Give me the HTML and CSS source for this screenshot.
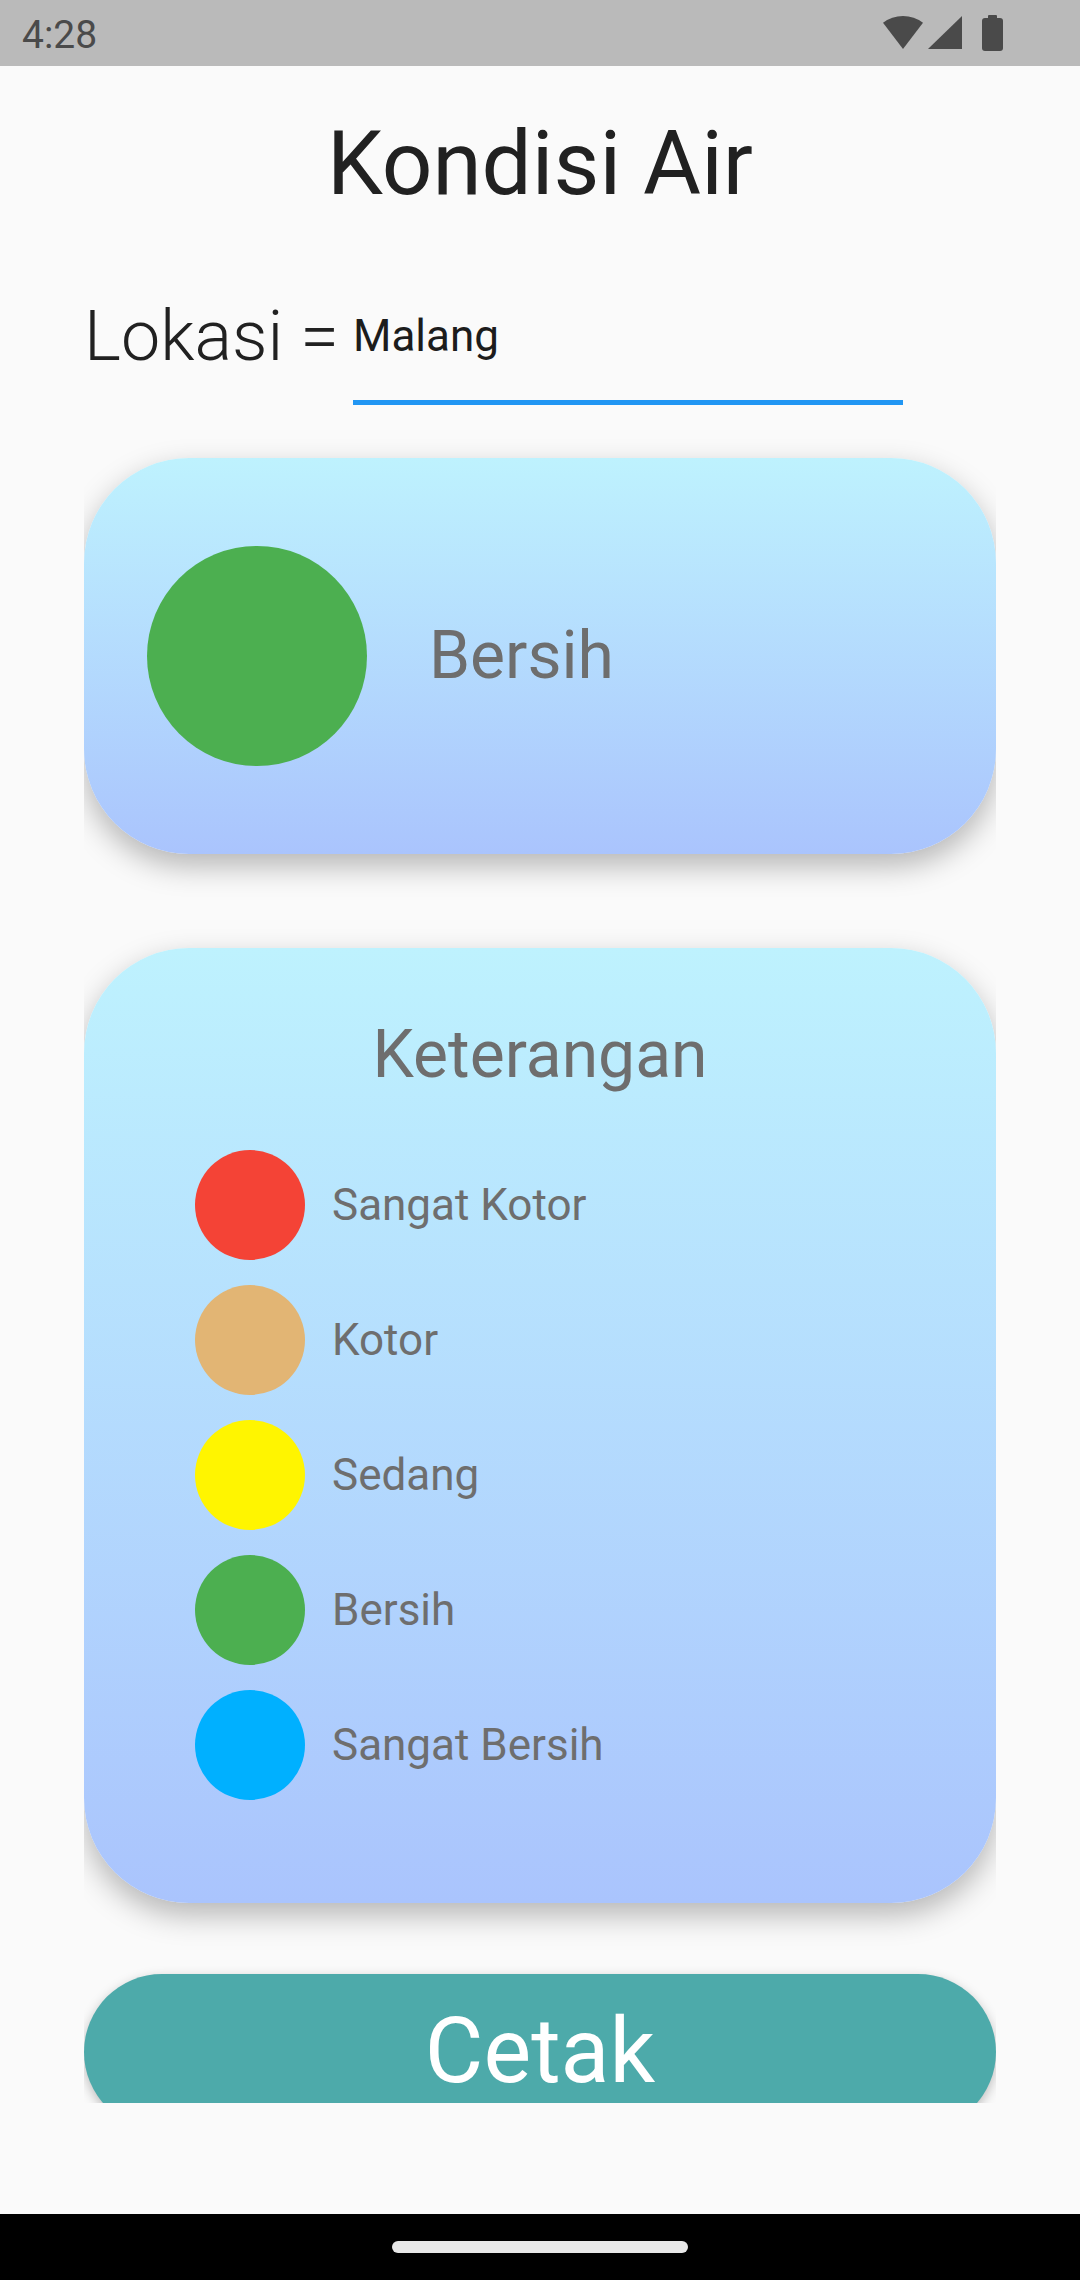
FILE: index.html
```html
<!DOCTYPE html>
<html lang="id">
<head>
<meta charset="utf-8">
<title>Kondisi Air</title>
<link rel="stylesheet" href="styles.css">
</head>
<body>
  <div class="status">
    <span class="time">4:28</span>
    <svg class="status-icons" width="121" height="66" viewBox="0 0 121 66">
      <path d="M20 49 L0 22.8 A33 33 0 0 1 40 22.8 Z" fill="#4a4a4a"/>
      <path d="M45 49 L79 16 L79 49 Z" fill="#4a4a4a"/>
      <rect x="105" y="15" width="9" height="5" rx="1" fill="#4a4a4a"/>
      <rect x="99" y="18" width="21" height="33" rx="3" fill="#4a4a4a"/>
    </svg>
  </div>

  <div class="screen">
    <div class="scroll">
      <h1 class="title">Kondisi Air</h1>

      <div class="loc-row">
        <span class="loc-label">Lokasi =</span>
        <div class="field">Malang</div>
      </div>

      <div class="card status-card">
        <span class="dot dot-big dot-green"></span>
        <span class="status-text">Bersih</span>
      </div>

      <div class="card legend-card">
        <div class="legend-title">Keterangan</div>
        <ul class="legend">
          <li class="legend-row"><span class="dot dot-red"></span><span class="legend-label">Sangat Kotor</span></li>
          <li class="legend-row"><span class="dot dot-tan"></span><span class="legend-label">Kotor</span></li>
          <li class="legend-row"><span class="dot dot-yellow"></span><span class="legend-label">Sedang</span></li>
          <li class="legend-row"><span class="dot dot-green"></span><span class="legend-label">Bersih</span></li>
          <li class="legend-row"><span class="dot dot-blue"></span><span class="legend-label">Sangat Bersih</span></li>
        </ul>
      </div>

      <button class="print-btn" type="button">Cetak</button>
    </div>
  </div>

  <div class="navbar">
    <span class="handle"></span>
  </div>
</body>
</html>
```

FILE: styles.css
```css
* {
  box-sizing: border-box;
}

html, body {
  margin: 0;
  padding: 0;
}

body {
  width: 1080px;
  height: 2280px;
  background: #fafafa;
  font-family: Roboto, "Noto Sans", "Liberation Sans", sans-serif;
  display: flex;
  flex-direction: column;
  overflow: hidden;
}

/* Status bar */
.status {
  height: 66px;
  flex-shrink: 0;
  background: #bababa;
  display: flex;
  align-items: flex-start;
  padding-left: 22px;
}

.time {
  padding-top: 4px;
  font-size: 39px;
  line-height: 62px;
  color: #4a4a4a;
}

.status-icons {
  margin-left: auto;
  margin-right: 76px;
}

/* Screen */
.screen {
  flex: 1;
  display: flex;
  flex-direction: column;
}

.scroll {
  margin: 0 84px;
  height: 2037px;
  overflow: hidden;
  display: flex;
  flex-direction: column;
}

.scroll > * {
  flex-shrink: 0;
}

.title {
  margin: 45px 0 0;
  font-size: 89px;
  line-height: 106px;
  font-weight: 400;
  color: #212121;
  text-align: center;
}

.loc-row {
  margin-top: 77px;
  display: flex;
  align-items: flex-start;
}

.loc-label {
  width: 269px;
  font-size: 70px;
  font-weight: 300;
  line-height: 84px;
  color: #212121;
  white-space: nowrap;
}

.field {
  width: 550px;
  margin-top: 16px;
  padding-bottom: 38px;
  border-bottom: 5px solid #2196f3;
  font-size: 44px;
  line-height: 52px;
  color: #1c1c1c;
}

/* Cards */
.card {
  border-radius: 105px;
  background: linear-gradient(to bottom, #bef2fe, #aac4fd);
  box-shadow: 0 12px 30px rgba(0, 0, 0, 0.28);
}

.status-card {
  margin-top: 53px;
  height: 396px;
  display: flex;
  align-items: center;
  padding-left: 63px;
  gap: 62px;
}

.status-text {
  font-size: 66px;
  line-height: 78px;
  color: #6e6e6e;
}

.dot {
  display: block;
  width: 110px;
  height: 110px;
  border-radius: 50%;
  flex-shrink: 0;
}

.dot-big {
  width: 220px;
  height: 220px;
}

.dot-red { background: #f44336; }
.dot-tan { background: #e2b574; }
.dot-yellow { background: #fff500; }
.dot-green { background: #4caf50; }
.dot-blue { background: #00b0ff; }

.legend-card {
  margin-top: 94px;
  height: 955px;
  padding-top: 68px;
}

.legend-title {
  font-size: 66px;
  line-height: 78px;
  color: #6e6e6e;
  text-align: center;
}

.legend {
  list-style: none;
  margin: 43px 0 0;
  padding: 0 0 0 111px;
}

.legend-row {
  height: 135px;
  display: flex;
  align-items: center;
  gap: 27px;
}

.legend-label {
  font-size: 44px;
  line-height: 52px;
  color: #6e6e6e;
}

/* Button */
.print-btn {
  margin-top: 71px;
  height: 156px;
  width: 100%;
  border: none;
  border-radius: 78px;
  background: #4daaaa;
  color: #ffffff;
  font-family: Roboto, "Noto Sans", "Liberation Sans", sans-serif;
  font-size: 90px;
  line-height: 156px;
  padding: 0;
  box-shadow: 0 4px 12px rgba(0, 0, 0, 0.25);
}

/* Navigation bar */
.navbar {
  height: 66px;
  flex-shrink: 0;
  background: #000000;
  display: flex;
  justify-content: center;
  padding-top: 27px;
}

.handle {
  display: block;
  width: 296px;
  height: 12px;
  border-radius: 6px;
  background: #e8e8e8;
}
```
